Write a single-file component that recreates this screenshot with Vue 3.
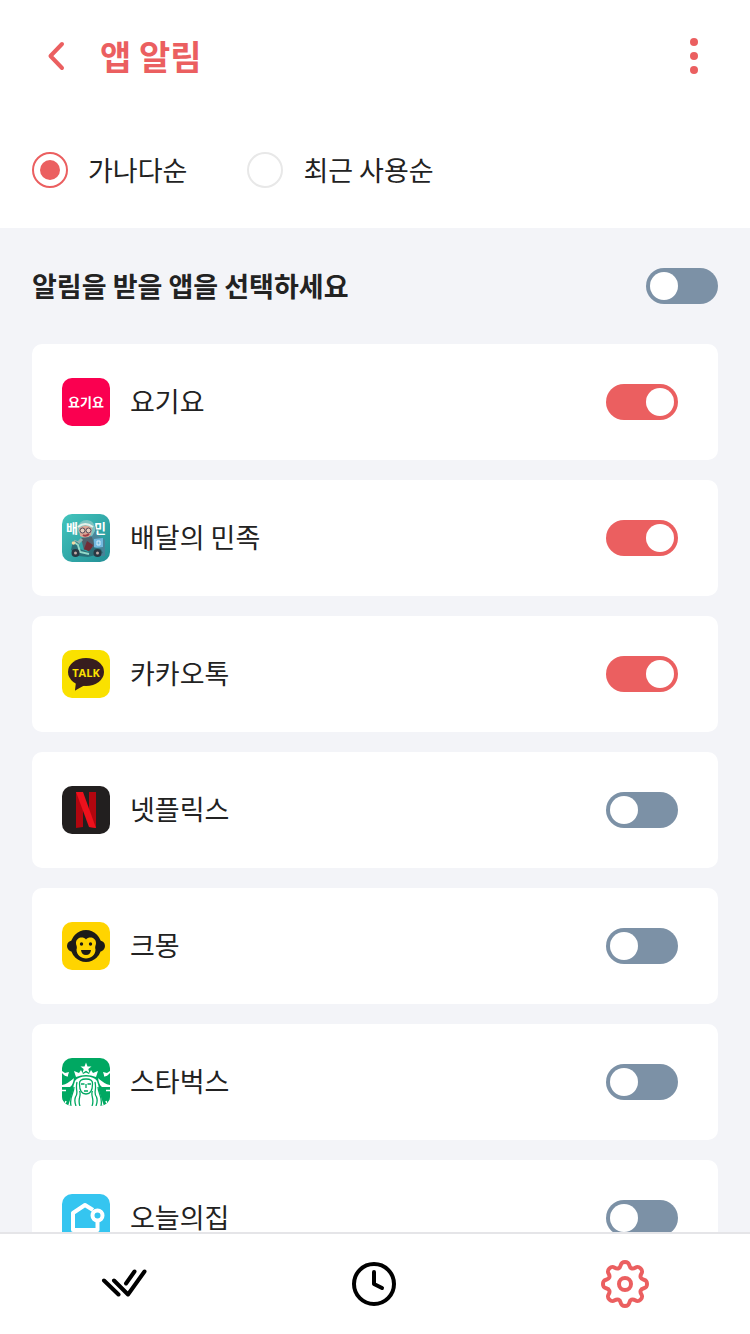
<template>
  <div class="page">
    <!-- 상단 헤더 -->
    <header class="header">
      <button class="icon-button" type="button" aria-label="뒤로">
        <svg viewBox="0 0 48 48" width="48" height="48">
          <path class="line-red" d="M30 12 L18.500 24 L30 36" />
        </svg>
      </button>
      <h1 class="title">앱 알림</h1>
      <button class="icon-button" type="button" aria-label="더보기">
        <svg viewBox="0 0 48 48" width="48" height="48" fill="#eb5f60">
          <circle cx="24" cy="10" r="4" />
          <circle cx="24" cy="24" r="4" />
          <circle cx="24" cy="38" r="4" />
        </svg>
      </button>
    </header>

    <!-- 정렬 -->
    <div class="sort">
      <label v-for="option in sortOptions" :key="option.value" class="sort-item">
        <input v-model="sort" class="radio" type="radio" name="sort" :value="option.value" />
        <span>{{ option.label }}</span>
      </label>
    </div>

    <main class="content">
      <div class="all-row">
        <label class="all-title" for="all-toggle">알림을 받을 앱을 선택하세요</label>
        <input id="all-toggle" v-model="all" class="toggle" type="checkbox" />
      </div>

      <!-- 앱 목록 -->
      <ul class="app-list">
        <li v-for="app in apps" :key="app.id" class="app-card">
          <svg class="app-icon" viewBox="0 0 48 48" width="48" height="48" aria-hidden="true">
            <g v-if="app.id === 'yogiyo'">
              <rect width="48" height="48" fill="#fa0050" />
              <text class="yogiyo-text" x="24" y="29" text-anchor="middle">요기요</text>
            </g>

            <g v-else-if="app.id === 'baemin'">
              <defs>
                <linearGradient id="baemin-bg" x1="0" y1="0" x2="1" y2="1">
                  <stop offset="0" stop-color="#43c5bd" />
                  <stop offset="1" stop-color="#238f96" />
                </linearGradient>
              </defs>
              <rect width="48" height="48" fill="url(#baemin-bg)" />
              <text class="baemin-text" x="4" y="19">배</text>
              <text class="baemin-text" x="32" y="19">민</text>
              <path d="M29 8 Q36 12 34 20 L43 26 V42 H31 L25 23 Z" fill="#557996" opacity=".7" />
              <!-- 헬멧과 얼굴 -->
              <path d="M15 15 Q17 6 25 6 Q34 7 33 17 L30 22 L17 19 Z" fill="#7cc4c2" />
              <path d="M17 14 Q24 9 30 14 L29 21 Q24 26 18 22 Z" fill="#dba797" />
              <path d="M16 13 Q23 7 31 13" fill="none" stroke="#e4f0e9" stroke-width="2" />
              <circle cx="20.5" cy="16.5" r="2.5" fill="#e8cdbd" stroke="#514859" />
              <circle cx="26.5" cy="16.5" r="2.5" fill="#e8cdbd" stroke="#514859" />
              <path d="M21 21 Q24 23 27 20" fill="none" stroke="#a03e46" stroke-width="2" />
              <!-- 몸과 스쿠터 -->
              <path d="M19 24 L30 23 L33 34 L22 36 Z" fill="#50626d" />
              <path d="M20 25 L16 29 L12 27" fill="none" stroke="#8fb4b0" stroke-width="3" />
              <path d="M25 27 L31 31 L28 38 L22 35 Z" fill="#712d36" />
              <path d="M32 25 L41 24 V33 L32 34 Z" fill="#71b9df" />
              <path d="M35 27 H38 V31 H35 Z" fill="none" stroke="#d7effa" />
              <path d="M11 27 Q18 27 18 35 L26 38 L31 33 L39 35 L41 39 L26 43 L16 42 L9 36 Z" fill="#2b6f78" />
              <path d="M12 28 L16 31 L18 38 L27 40" fill="none" stroke="#94d8c8" stroke-width="2" />
              <circle cx="13.500" cy="39" r="4" fill="#293843" />
              <circle cx="35.500" cy="39" r="4" fill="#293843" />
              <circle cx="13.500" cy="39" r="1.5" fill="#c1aba7" />
              <circle cx="35.500" cy="39" r="1.5" fill="#c1aba7" />
              <circle cx="11.500" cy="29" r="1.8" fill="#f3d8a4" />
            </g>

            <g v-else-if="app.id === 'kakao'">
              <rect width="48" height="48" fill="#fae100" />
              <ellipse cx="24" cy="22" rx="18" ry="14" fill="#371d1e" />
              <path d="M14 32 L13 40 Q13 41 14 40 L23 35 Z" fill="#371d1e" />
              <text class="kakao-text" x="24" y="27" text-anchor="middle">TALK</text>
            </g>

            <g v-else-if="app.id === 'netflix'">
              <rect width="48" height="48" fill="#221f1f" />
              <path d="M14 6 H21 V41 L14 42 Z M27 6 H34 V42 L27 41 Z" fill="#b1060f" />
              <path d="M14 6 H21 L34 42 L27 41 Z" fill="#ed111c" />
            </g>

            <g v-else-if="app.id === 'kmong'">
              <rect width="48" height="48" fill="#ffd400" />
              <g fill="#1c1b18">
                <circle cx="10.5" cy="24" r="5.5" />
                <circle cx="37.5" cy="24" r="5.5" />
                <ellipse cx="24" cy="24" rx="15.5" ry="16" />
              </g>
              <path
                d="M24 17.500 C21 14 14 15.500 14 21 C14 23.500 15.500 24.500 14.500 27.500 C14.500 33 19 36.500 24 36.500 C29 36.500 33.500 33 33.500 27.500 C32.500 24.500 34 23.500 34 21 C34 15.500 27 14 24 17.500 Z"
                fill="#ffd400"
              />
              <g fill="#1c1b18">
                <circle cx="19.5" cy="22" r="1.7" />
                <circle cx="28.5" cy="22" r="1.7" />
                <path d="M19 28 H29 Q28.500 33 24 33 Q19.500 33 19 28 Z" />
              </g>
            </g>

            <g v-else-if="app.id === 'starbucks'">
              <rect width="48" height="48" fill="#00a862" />
              <g fill="#fff">
                <path d="M24 4.500 L25.500 8.500 H29.500 L26.300 11 L27.500 15 L24 12.700 L20.500 15 L21.700 11 L18.500 8.500 H22.500 Z" />
                <path d="M12 13 L17 15 L19 12 L21 16 L24 14.500 L27 16 L29 12 L31 15 L36 13 L34 19 Q24 15 14 19 Z" />
                <path d="M13 23 Q16 18.500 24 18.500 Q32 18.500 35 23 Q37 28 37 33 L42 48 H6 L11 33 Q11 28 13 23 Z" />
                <path d="M0 13 L3 15 L7 14 Q4 21 9 22 L12 20 Q11 27 8 29 L0 29 Z" />
                <path d="M48 13 L45 15 L41 14 Q44 21 39 22 L36 20 Q37 27 40 29 L48 29 Z" />
              </g>
              <path d="M0 15 Q5 21 9 17 L13 19 Q6 26 0 27 Z M48 15 Q43 21 39 17 L35 19 Q42 26 48 27 Z" fill="#00a862" />
              <g class="siren-line">
                <path d="M17.500 26 Q17 21 24 21 Q31 21 30.500 26 Q30.500 36 24 36 Q17.500 36 17.500 26 Z" />
                <path d="M15 24 C13 33 17 34 13.500 39 Q12 43 14 48 M12 29 C12 36 7 38 9 48" />
                <path d="M33 24 C35 33 31 34 34.500 39 Q36 43 34 48 M36 29 C36 36 41 38 39 48" />
                <path d="M17.500 33 C20 37 15 41 18 48 M30.500 33 C28 37 33 41 30 48" />
                <path d="M19 26 H22.500 M25.500 26 H29 M24 26 V30 M22 33 H26" />
              </g>
              <path d="M0 34 L6 31 L8 35 L5 48 H0 Z M48 34 L42 31 L40 35 L43 48 H48 Z" fill="#00a862" />
              <path d="M0 32.500 H4 M48 32.500 H44 M4 43 L2 48 M44 43 L46 48" stroke="#fff" stroke-width="1.5" />
            </g>

            <g v-else>
              <rect width="48" height="48" fill="#35c5f0" />
              <path class="house-line" d="M31 16 L23 11 L11 19 V36 H35.500 V27" />
              <circle class="house-line" cx="35.500" cy="21.500" r="5" />
            </g>
          </svg>
          <label class="app-name" :for="`toggle-${app.id}`">{{ app.name }}</label>
          <input :id="`toggle-${app.id}`" v-model="app.on" class="toggle" type="checkbox" />
        </li>
      </ul>
    </main>

    <!-- 하단 메뉴 -->
    <nav class="nav">
      <button class="nav-button" type="button" aria-label="확인한 알림">
        <svg class="nav-icon" viewBox="0 0 48 48" width="48" height="48">
          <path d="M3 20.500 L17.500 34.500 M13 20.500 L27 34.500 L43.500 11.500 M33.500 11.500 L25 23.500" />
        </svg>
      </button>
      <button class="nav-button" type="button" aria-label="최근 기록">
        <svg class="nav-icon" viewBox="0 0 48 48" width="48" height="48">
          <circle cx="23" cy="24" r="20" />
          <path d="M23 12 V24 L31 28" />
        </svg>
      </button>
      <button class="nav-button active" type="button" aria-label="설정">
        <svg class="nav-icon" viewBox="0 0 48 48" width="48" height="48">
          <path :d="gearPath" />
          <circle cx="24" cy="24" r="6" />
        </svg>
      </button>
    </nav>
  </div>
</template>

<script setup>
import { ref } from 'vue'

// 정렬 옵션
const sortOptions = [
  { value: 'name', label: '가나다순' },
  { value: 'recent', label: '최근 사용순' },
]
const sort = ref('name')

// 전체 알림
const all = ref(false)

// 앱 목록
const apps = ref([
  { id: 'yogiyo', name: '요기요', on: true },
  { id: 'baemin', name: '배달의 민족', on: true },
  { id: 'kakao', name: '카카오톡', on: true },
  { id: 'netflix', name: '넷플릭스', on: false },
  { id: 'kmong', name: '크몽', on: false },
  { id: 'starbucks', name: '스타벅스', on: false },
  { id: 'ohouse', name: '오늘의집', on: false },
])

// 톱니 8개짜리 설정 아이콘
const makeGear = () => {
  // radius 위치에서 접선 방향으로 offset 만큼 이동한 점
  const point = (index, radius, offset) => {
    const angle = (index * Math.PI) / 8
    const x = 24 + radius * Math.cos(angle) - offset * Math.sin(angle)
    const y = 24 + radius * Math.sin(angle) + offset * Math.cos(angle)
    return `${x.toFixed(2)} ${y.toFixed(2)}`
  }
  let path = `M${point(0, 22, 0)}`
  for (let i = 0; i < 16; i++) {
    const isTip = i % 2 === 0
    const from = isTip ? 22 : 17
    const to = isTip ? 17 : 22
    const start = isTip ? 6 : 4
    const end = isTip ? -4 : -6
    path += ` C${point(i, from, start)} ${point(i + 1, to, end)} ${point(i + 1, to, 0)}`
  }
  return `${path} Z`
}
const gearPath = makeGear()
</script>

<style>
body {
  margin: 0;
}
</style>

<style scoped>
.page {
  display: flex;
  flex-direction: column;
  height: 100vh;
  background-color: #fff;
  color: #222;
  font-family: 'Noto Sans CJK KR', sans-serif;
  font-size: 27px;
  line-height: 36px;
}

button {
  padding: 0;
  border: none;
  background: none;
  cursor: pointer;
}

/* 헤더 */
.header {
  display: flex;
  flex-shrink: 0;
  align-items: center;
  gap: 20px;
  height: 112px;
  padding: 0 32px;
}

.icon-button {
  display: flex;
}

.line-red {
  fill: none;
  stroke: #eb5f60;
  stroke-width: 4;
  stroke-linecap: round;
  stroke-linejoin: round;
}

.title {
  flex: 1;
  margin: 0;
  color: #eb5f60;
  font-size: 34px;
  font-weight: 700;
  line-height: 48px;
}

/* 정렬 */
.sort {
  display: flex;
  flex-shrink: 0;
  align-items: center;
  gap: 60px;
  height: 116px;
  padding: 0 32px;
}

.sort-item {
  display: flex;
  align-items: center;
  gap: 20px;
  cursor: pointer;
}

.radio {
  display: grid;
  place-items: center;
  box-sizing: border-box;
  width: 36px;
  height: 36px;
  margin: 0;
  border: 2px solid #e8e8e8;
  border-radius: 50%;
  appearance: none;
}

.radio:checked {
  border-color: #eb5f60;
}

.radio:checked::before {
  content: '';
  width: 20px;
  height: 20px;
  border-radius: 50%;
  background-color: #eb5f60;
}

/* 본문 */
.content {
  flex: 1;
  min-height: 0;
  padding: 0 32px;
  overflow-y: auto;
  background-color: #f3f4f8;
  scrollbar-width: none;
}

.all-row {
  display: flex;
  align-items: center;
  justify-content: space-between;
  height: 116px;
}

.all-title {
  font-weight: 700;
}

.toggle {
  display: flex;
  flex-shrink: 0;
  box-sizing: border-box;
  width: 72px;
  height: 36px;
  margin: 0;
  padding: 4px;
  border-radius: 18px;
  background-color: #7c91a6;
  appearance: none;
  cursor: pointer;
}

.toggle::before {
  content: '';
  width: 28px;
  height: 28px;
  border-radius: 50%;
  background-color: #fff;
}

.toggle:checked {
  justify-content: flex-end;
  background-color: #eb5f60;
}

/* 앱 목록 */
.app-list {
  display: flex;
  flex-direction: column;
  gap: 20px;
  margin: 0;
  padding: 0 0 20px;
  list-style: none;
}

.app-card {
  display: flex;
  align-items: center;
  gap: 20px;
  height: 116px;
  padding: 0 40px 0 30px;
  border-radius: 10px;
  background-color: #fff;
}

.app-icon {
  flex-shrink: 0;
  border-radius: 10px;
}

.app-name {
  flex: 1;
  line-height: 32px;
  padding-bottom: 2px;
}

.yogiyo-text {
  fill: #fff;
  font-size: 13px;
  font-weight: 700;
}

.baemin-text {
  fill: #fff;
  font-size: 13px;
  font-weight: 700;
}

.kakao-text {
  fill: #fae100;
  font-family: 'Open Sans', sans-serif;
  font-size: 11px;
  font-weight: 700;
}

.siren-line {
  fill: none;
  stroke: #00a862;
  stroke-width: 1.3;
}

.house-line {
  fill: #35c5f0;
  stroke: #fff;
  stroke-width: 4;
  stroke-linejoin: round;
}

/* 하단 메뉴 */
.nav {
  display: flex;
  flex-shrink: 0;
  height: 100px;
  border-top: 2px solid #e5e5e8;
  background-color: #fff;
}

.nav-button {
  display: flex;
  flex: 1;
  align-items: center;
  justify-content: center;
  color: #000;
}

.nav-button.active {
  color: #eb5f60;
}

.nav-icon {
  fill: none;
  stroke: currentColor;
  stroke-width: 4;
  stroke-linecap: round;
  stroke-linejoin: round;
}
</style>
